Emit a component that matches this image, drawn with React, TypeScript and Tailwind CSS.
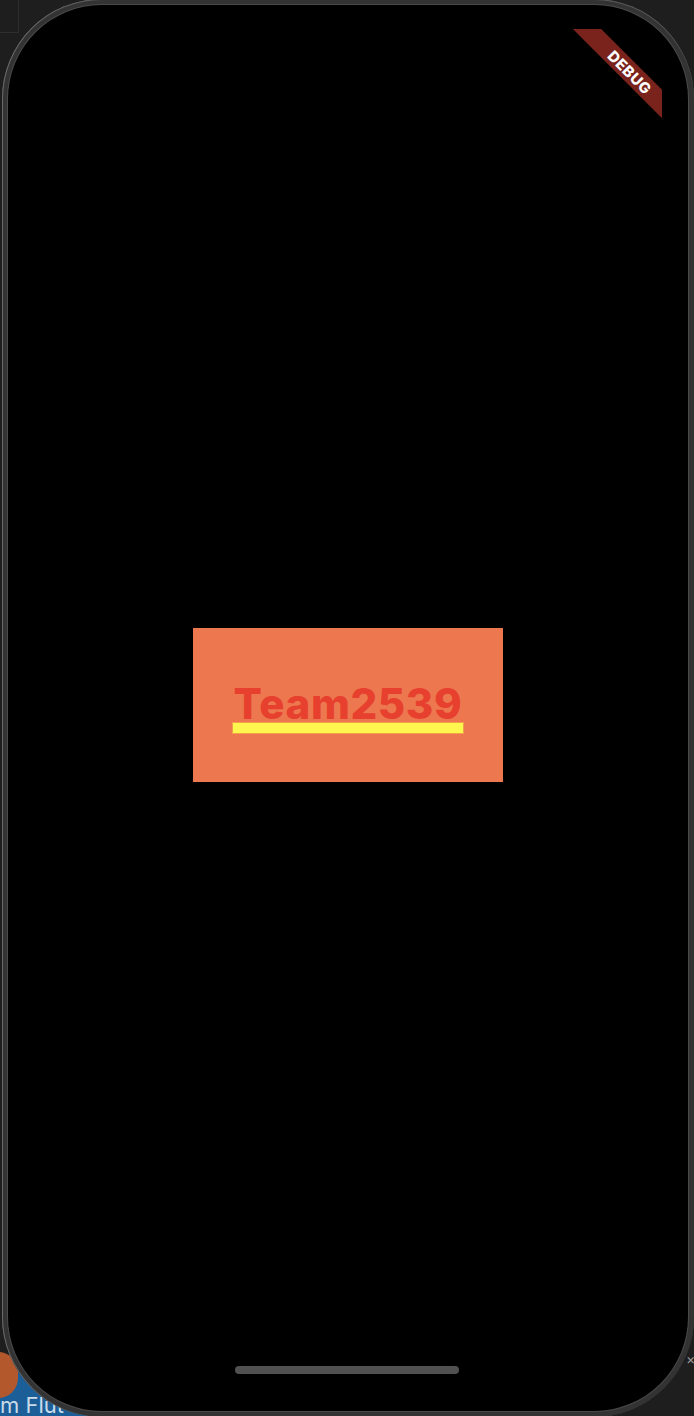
import React from "react";

export default function App() {
  return (
    <div
      className="relative w-[694px] h-[1416px] overflow-hidden bg-[#1e1e1e]"
      style={{ fontFamily: "Inter, Roboto, 'Liberation Sans', sans-serif" }}
    >
      {/* desktop bits behind the phone */}
      <div className="absolute left-[18px] top-0 h-[33px] w-px bg-[#2e2e2e]" />
      <div className="absolute left-0 top-[32px] h-px w-[18px] bg-[#2e2e2e]" />
      <div className="absolute left-0 top-[1370px] h-[46px] w-[90px] bg-[#1b5e98]">
        <div className="pt-[24px] text-[22px] leading-[22px] whitespace-nowrap text-[#c9dbe9]">m Flut</div>
      </div>
      <div className="absolute left-[-22px] top-[1352px] h-[46px] w-[40px] rounded-full bg-[#b3582c]" />
      <div className="absolute left-[686px] top-[1352px] text-[14px] leading-[14px] text-[#9a9a9a]">×</div>

      {/* phone */}
      <div className="relative ml-[2px] mt-[-1px] h-[1418px] w-[692px] rounded-[100px] bg-[#333333] p-[6px] shadow-[inset_1px_0_0_#6a6a6a,inset_0_1px_0_#5a5a5a]">
        <div className="relative flex h-full w-full items-center justify-center overflow-hidden rounded-[94px] bg-black ring-1 ring-[#4a4a4a]">
          <div className="mb-[6px] flex h-[154px] w-[310px] items-center justify-center bg-[#ed784f]">
            <div className="mt-[8px] flex flex-col items-stretch">
              <span className="px-[1px] text-[42px] font-extrabold leading-[38px] tracking-[0.6px] text-[#e7402e]">
                Team2539
              </span>
              <div className="h-[10px] bg-[#fff64f] ring-1 ring-[#f0a048]" />
            </div>
          </div>

          {/* home indicator */}
          <div className="absolute bottom-[37px] left-[227px] h-[8px] w-[224px] rounded-full bg-[#515151]" />

          {/* debug banner */}
          <div className="absolute right-[26px] top-[24px] h-[120px] w-[120px] overflow-hidden">
            <div className="absolute left-[8px] top-[33px] flex h-[20px] w-[160px] rotate-45 items-center justify-center bg-[#7a231c]">
              <span className="text-[15px] font-extrabold leading-[15px] tracking-[0.5px] text-white">DEBUG</span>
            </div>
          </div>
        </div>
      </div>
    </div>
  );
}
